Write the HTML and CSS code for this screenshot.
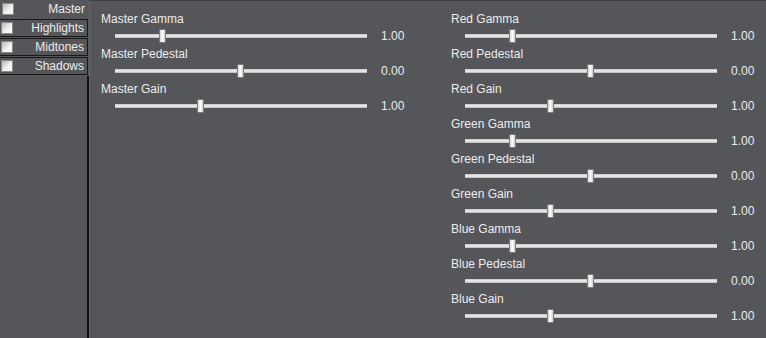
FILE: index.html
```html
<!DOCTYPE html>
<html lang="en">

<head>
    <meta charset="UTF-8">
    <title>Color Correct</title>
    <link rel="stylesheet" href="styles.css">
</head>

<body>
    <aside class="side">
        <div class="tab active"><span class="check"></span><span class="tab-label">Master</span></div>
        <div class="tab"><span class="check"></span><span class="tab-label">Highlights</span></div>
        <div class="tab"><span class="check"></span><span class="tab-label">Midtones</span></div>
        <div class="tab"><span class="check"></span><span class="tab-label">Shadows</span></div>
        <div class="side-rest"></div>
    </aside>

    <main class="panel">
        <section class="column" id="col-master"></section>
        <section class="column" id="col-rgb"></section>
    </main>

    <script>
        const masterParams = [
            { name: "Master Gamma", value: "1.00", pos: 0.19 },
            { name: "Master Pedestal", value: "0.00", pos: 0.5 },
            { name: "Master Gain", value: "1.00", pos: 0.34 }
        ];

        const rgbParams = [];
        ["Red", "Green", "Blue"].forEach(c => {
            rgbParams.push({ name: c + " Gamma", value: "1.00", pos: 0.19 });
            rgbParams.push({ name: c + " Pedestal", value: "0.00", pos: 0.5 });
            rgbParams.push({ name: c + " Gain", value: "1.00", pos: 0.34 });
        });

        function renderColumn(id, params) {
            const col = document.getElementById(id);
            params.forEach(p => {
                const row = document.createElement("div");
                row.className = "param";
                row.innerHTML = `
                    <div class="param-name">${p.name}</div>
                    <div class="param-control">
                        <div class="track"><span class="thumb" style="left: ${Math.round(p.pos * 252) - 4}px"></span></div>
                        <span class="param-value">${p.value}</span>
                    </div>
                `;
                col.appendChild(row);
            });
        }

        renderColumn("col-master", masterParams);
        renderColumn("col-rgb", rgbParams);
    </script>
</body>

</html>
```

FILE: styles.css
```css
*, *::before, *::after {
    box-sizing: border-box;
}

html, body {
    height: 100%;
}

body {
    margin: 0;
    display: flex;
    background: #55565a;
    color: #ececec;
    font-family: "Liberation Sans", Arial, sans-serif;
    font-size: 12px;
    overflow: hidden;
}

/* left tab strip */
.side {
    width: 89px;
    flex: none;
    display: flex;
    flex-direction: column;
}

.tab {
    height: 18px;
    width: 88px;
    display: flex;
    align-items: center;
    border: 1px solid #1a1a1b;
    border-left: none;
    margin-top: 1px;
    padding: 0 3px 0 1px;
}

.tab.active {
    border: none;
    width: 89px;
    margin-top: 0;
    padding: 0 4px 0 2px;
}

.check {
    width: 12px;
    height: 12px;
    border: 1px solid #8a8a8a;
    background: linear-gradient(135deg, #b8b8b8, #f4f4f4 60%, #ffffff);
    flex: none;
}

.tab-label {
    margin-left: auto;
}

.side-rest {
    flex: 1;
    width: 89px;
    margin-top: 1px;
    border-right: 2px solid #111112;
}

/* parameter area */
.panel {
    flex: 1;
    display: flex;
    border-left: 1px solid #65666a;
    border-top: 1px solid #3e3f42;
    padding: 11px 0 0 11px;
}

.column {
    width: 350px;
    flex: none;
}

.param {
    height: 35px;
}

.param-name {
    height: 15px;
    line-height: 15px;
}

.param-control {
    height: 18px;
    display: flex;
    align-items: center;
    padding-left: 14px;
}

.track {
    position: relative;
    width: 252px;
    height: 4px;
    background: linear-gradient(#c4c4c4, #f2f2f2 50%, #b6b6b6);
}

.thumb {
    position: absolute;
    top: -5px;
    width: 7px;
    height: 14px;
    border: 1px solid #7c7c7c;
    border-radius: 1px;
    background: linear-gradient(90deg, #d6d6d6, #ffffff 50%, #cfcfcf);
}

.param-value {
    margin-left: 14px;
}
```
